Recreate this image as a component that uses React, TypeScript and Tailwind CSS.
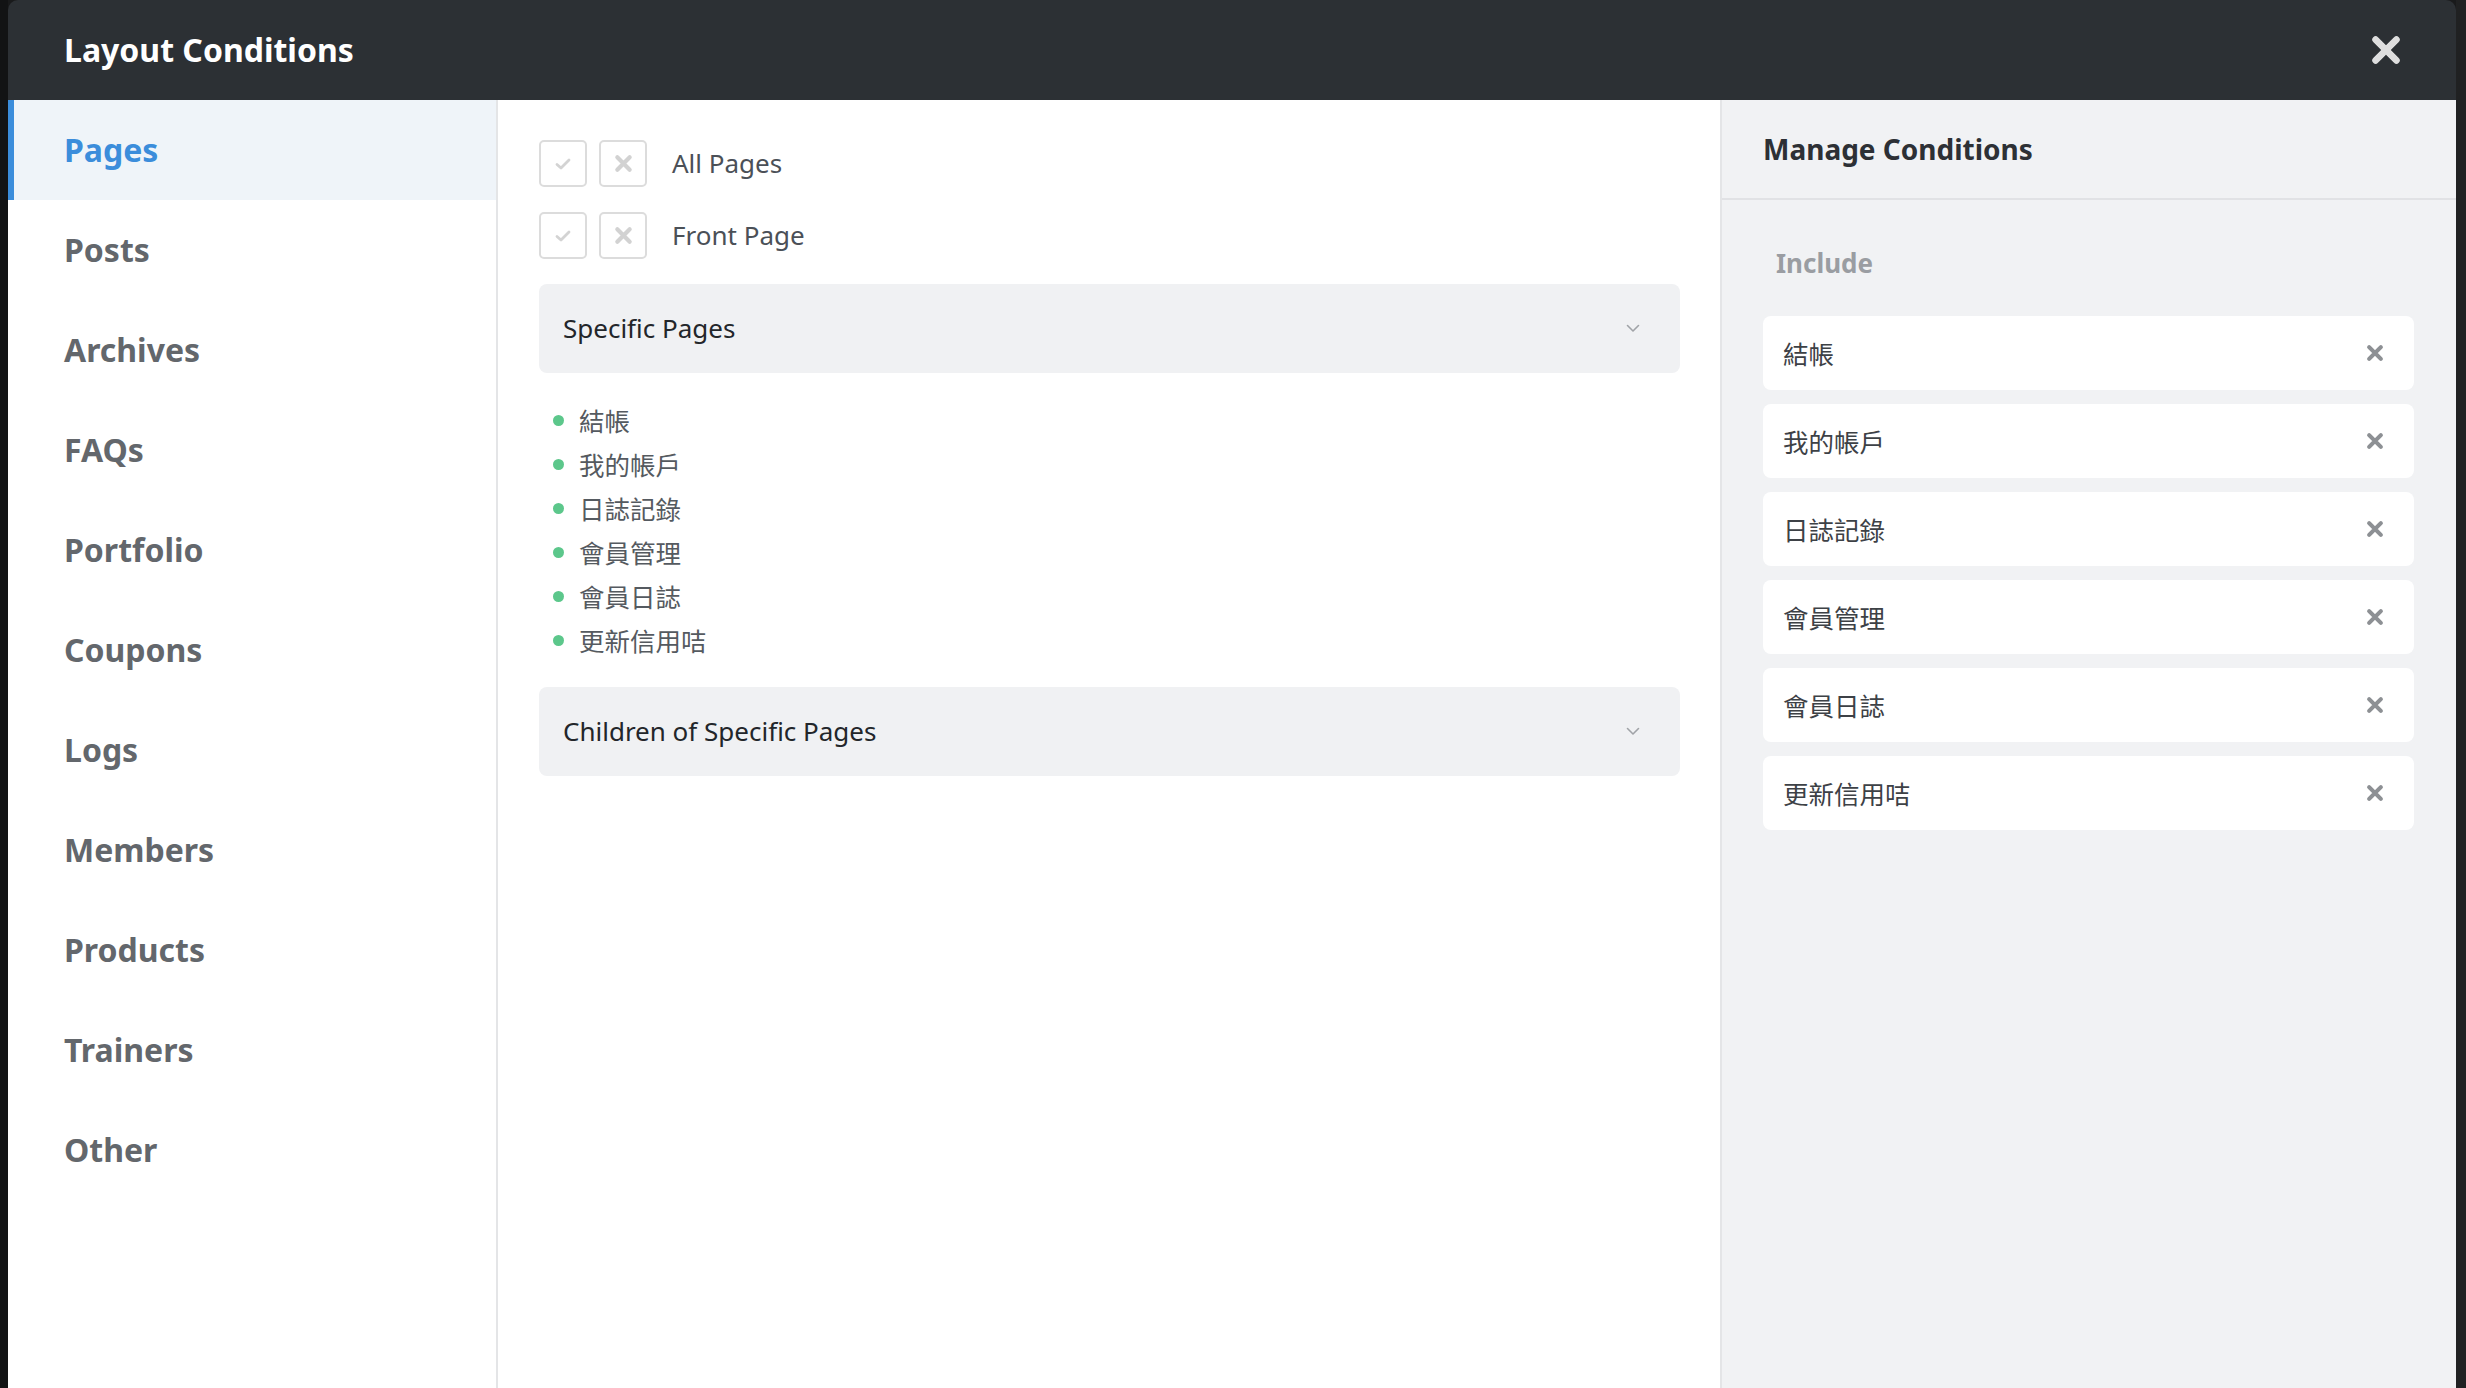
import React from "react";

const FONT = '"Noto Sans", "Open Sans", "Noto Sans CJK TC", sans-serif';

const navItems = [
  "Pages",
  "Posts",
  "Archives",
  "FAQs",
  "Portfolio",
  "Coupons",
  "Logs",
  "Members",
  "Products",
  "Trainers",
  "Other",
];

const pages = ["結帳", "我的帳戶", "日誌記錄", "會員管理", "會員日誌", "更新信用咭"];

function XIcon({ size, stroke, color }: { size: number; stroke: number; color: string }) {
  return (
    <svg width={size} height={size} viewBox="0 0 20 20" fill="none">
      <path d="M3.5 3.5 L16.5 16.5 M16.5 3.5 L3.5 16.5" stroke={color} strokeWidth={stroke} strokeLinecap="round" />
    </svg>
  );
}

function CheckIcon() {
  return (
    <svg width="16" height="14" viewBox="0 0 16 14" fill="none">
      <path d="M2 7.5 L6 11 L14 3" stroke="#d3d3d3" strokeWidth="2.8" strokeLinecap="round" strokeLinejoin="round" />
    </svg>
  );
}

function Chevron() {
  return (
    <svg width="14" height="9" viewBox="0 0 14 9" fill="none">
      <path d="M1.5 1.5 L7 7 L12.5 1.5" stroke="#a0a3a7" strokeWidth="1.6" strokeLinecap="round" strokeLinejoin="round" />
    </svg>
  );
}

function CheckRow({ label }: { label: string }) {
  return (
    <div className="flex items-center h-[47px]">
      <div className="w-[48px] h-[47px] border-2 border-[#dcdcdc] rounded-[5px] flex items-center justify-center">
        <CheckIcon />
      </div>
      <div className="w-[48px] h-[47px] ml-[12px] border-2 border-[#dcdcdc] rounded-[5px] flex items-center justify-center">
        <XIcon size={19} stroke={4.4} color="#d2d2d2" />
      </div>
      <span className="ml-[25px] text-[26px] text-[#4b5057]">{label}</span>
    </div>
  );
}

function Accordion({ label }: { label: string }) {
  return (
    <div className="h-[89px] bg-[#f0f1f3] rounded-[8px] flex items-center justify-between pl-[24px] pr-[40px]">
      <span className="text-[26px] text-[#23262a]">{label}</span>
      <Chevron />
    </div>
  );
}

export default function App() {
  return (
    <div
      className="w-[2466px] h-[1388px] bg-[#191a1b] flex overflow-hidden"
      style={{ fontFamily: FONT }}
    >
      <div className="w-[8px] shrink-0 bg-[#121314]" />
      <div className="w-[2448px] shrink-0 flex flex-col rounded-t-[10px] overflow-hidden">
        {/* Header */}
        <div className="h-[100px] shrink-0 bg-[#2c3034] flex items-center justify-between pl-[56px] pr-[54px]">
          <span className="text-[32px] font-bold text-white">Layout Conditions</span>
          <XIcon size={32} stroke={4.2} color="#dedede" />
        </div>
        {/* Body */}
        <div className="flex-1 flex min-h-0">
          {/* Sidebar */}
          <div className="w-[490px] shrink-0 bg-white border-r-2 border-[#e4e5e7] flex flex-col">
            {navItems.map((item, i) => (
              <div
                key={item}
                className={
                  i === 0
                    ? "h-[100px] flex items-center border-l-[6px] border-[#3b8ddb] bg-[#eff4f9] pl-[50px] text-[32px] font-bold text-[#3b8ddb]"
                    : "h-[100px] flex items-center border-l-[6px] border-transparent pl-[50px] text-[32px] font-bold text-[#63676c]"
                }
              >
                {item}
              </div>
            ))}
          </div>
          {/* Middle */}
          <div className="w-[1224px] shrink-0 bg-white border-r-2 border-[#e4e5e7] pl-[41px] pr-[40px] pt-[40px] flex flex-col gap-[25px]">
            <CheckRow label="All Pages" />
            <CheckRow label="Front Page" />
            <Accordion label="Specific Pages" />
            <div className="flex flex-col">
              {pages.map((p) => (
                <div key={p} className="h-[44px] flex items-center">
                  <span className="w-[11px] h-[11px] rounded-full bg-[#5cc78b] ml-[14px]" />
                  <span
                    className="ml-[15px] text-[25.5px] text-[#555a60]"
                    style={{ fontFamily: '"Noto Sans CJK TC", "Noto Sans", sans-serif' }}
                  >
                    {p}
                  </span>
                </div>
              ))}
            </div>
            <Accordion label="Children of Specific Pages" />
          </div>
          {/* Right */}
          <div className="flex-1 bg-[#f1f2f4] flex flex-col">
            <div className="h-[100px] shrink-0 border-b-2 border-[#e1e2e5] flex items-center pl-[41px]">
              <span className="text-[28px] font-bold text-[#2d3035]">Manage Conditions</span>
            </div>
            <div className="pl-[41px] pr-[42px] pt-[45px] flex flex-col">
              <div className="h-[36px] flex items-center pl-[13px] text-[26px] font-bold text-[#9a9da2]">
                Include
              </div>
              <div className="mt-[35px] flex flex-col gap-[14px]">
                {pages.map((p) => (
                  <div
                    key={p}
                    className="h-[74px] bg-white rounded-[8px] flex items-center justify-between pl-[20px] pr-[30px]"
                  >
                    <span
                      className="text-[25.5px] text-[#3d4146]"
                      style={{ fontFamily: '"Noto Sans CJK TC", "Noto Sans", sans-serif' }}
                    >
                      {p}
                    </span>
                    <XIcon size={18} stroke={4.6} color="#8d9094" />
                  </div>
                ))}
              </div>
            </div>
          </div>
        </div>
      </div>
      <div className="flex-1 bg-[#202122]" />
    </div>
  );
}
